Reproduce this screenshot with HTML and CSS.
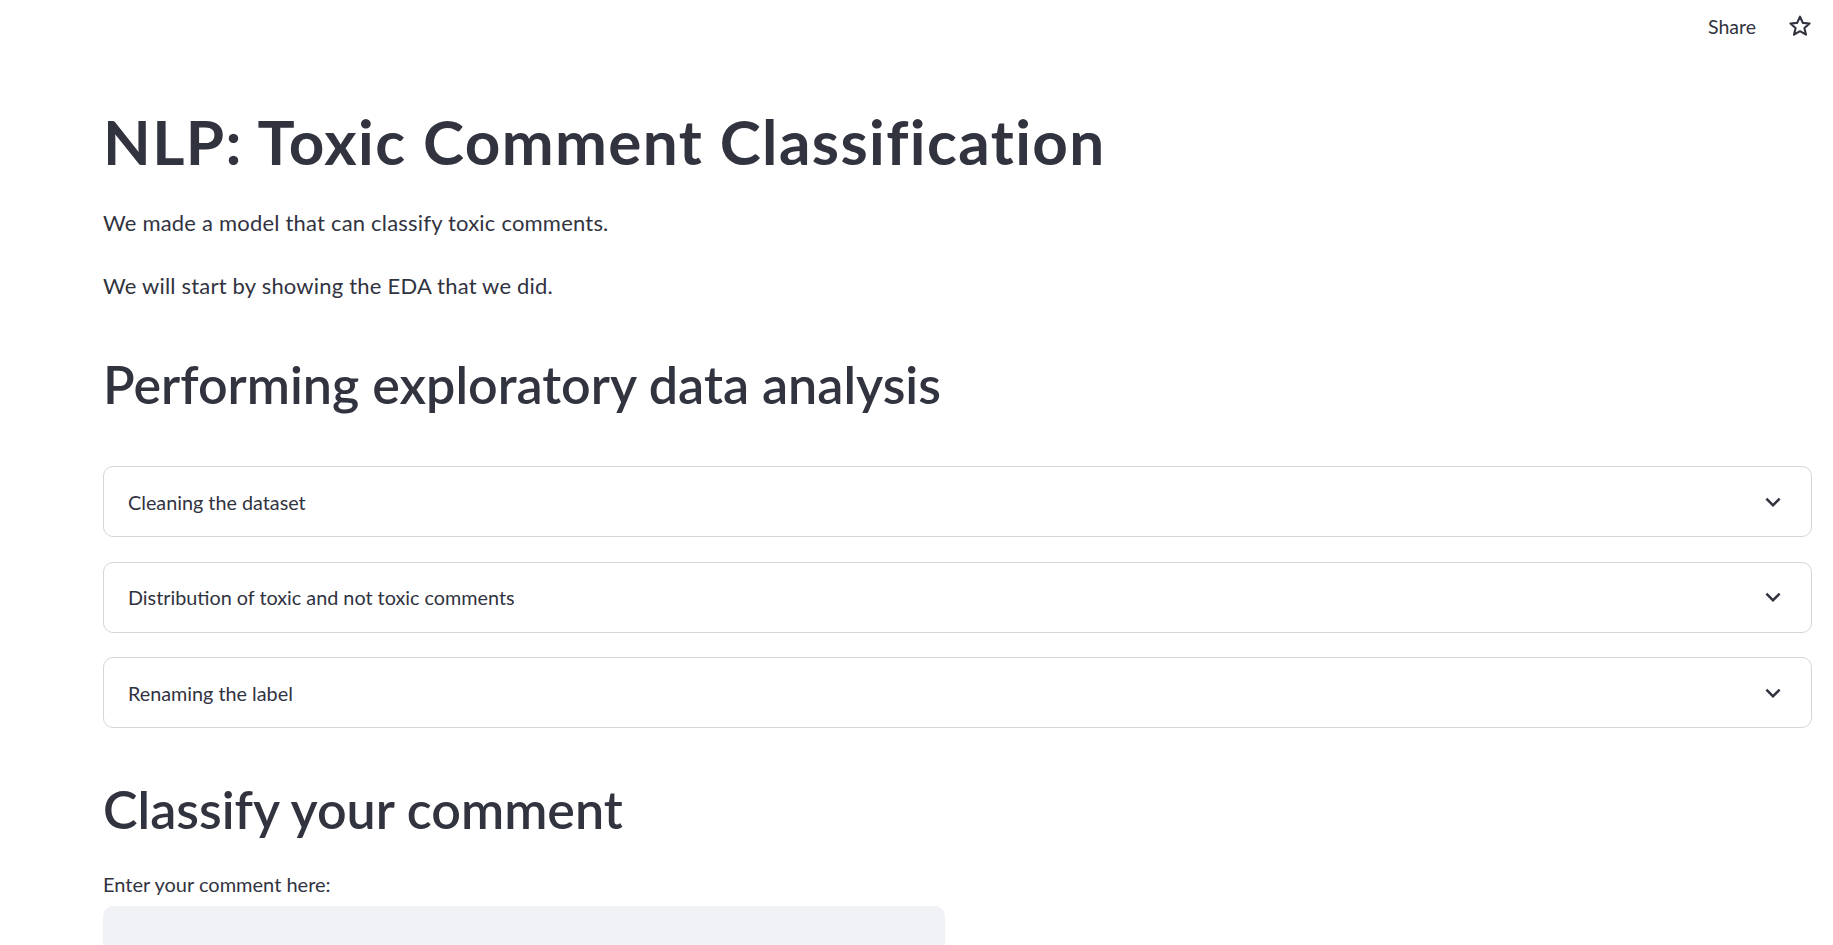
FILE: index.html
```html
<!DOCTYPE html>
<html lang="en">
<head>
<meta charset="utf-8">
<title>NLP: Toxic Comment Classification</title>
<link rel="stylesheet" href="styles.css">
</head>
<body>
<header class="topbar">
  <span class="share">Share</span>
  <svg class="star" viewBox="0 0 24 24" width="24" height="24" aria-hidden="true">
    <polygon points="12,2.6 14.8,8.9 21.6,9.5 16.4,14 18,20.7 12,17.2 6,20.7 7.6,14 2.4,9.5 9.2,8.9" fill="none" stroke="#31333F" stroke-width="2.1" stroke-linejoin="round"/>
  </svg>
</header>
<main class="main">
  <h1 class="title">NLP: Toxic Comment Classification</h1>
  <p class="text first">We made a model that can classify toxic comments.</p>
  <p class="text second">We will start by showing the EDA that we did.</p>

  <h2 class="header eda">Performing exploratory data analysis</h2>

  <div class="expanders">
    <div class="expander">
      <span class="exp-label">Cleaning the dataset</span>
      <svg class="chev" viewBox="0 0 24 24" width="30" height="30" aria-hidden="true"><path d="M16.59 8.59L12 13.17 7.41 8.59 6 10l6 6 6-6z" fill="#31333F"/></svg>
    </div>
    <div class="expander">
      <span class="exp-label">Distribution of toxic and not toxic comments</span>
      <svg class="chev" viewBox="0 0 24 24" width="30" height="30" aria-hidden="true"><path d="M16.59 8.59L12 13.17 7.41 8.59 6 10l6 6 6-6z" fill="#31333F"/></svg>
    </div>
    <div class="expander">
      <span class="exp-label">Renaming the label</span>
      <svg class="chev" viewBox="0 0 24 24" width="30" height="30" aria-hidden="true"><path d="M16.59 8.59L12 13.17 7.41 8.59 6 10l6 6 6-6z" fill="#31333F"/></svg>
    </div>
  </div>

  <h2 class="header classify">Classify your comment</h2>
  <label class="field-label" for="comment">Enter your comment here:</label>
  <textarea id="comment" class="comment"></textarea>
</main>
</body>
</html>
```

FILE: styles.css
```css
html, body {
  margin: 0;
  padding: 0;
  background: #ffffff;
  overflow: hidden;
}
body {
  font-family: "Lato", "Source Sans Pro", "Noto Sans", sans-serif;
  color: #31333F;
}
.topbar {
  height: 52px;
  display: flex;
  align-items: center;
  justify-content: flex-end;
  gap: 32px;
  padding-right: 21px;
}
.share {
  font-size: 19.5px;
  color: #31333F;
}
.star {
  width: 24px;
  height: 24px;
}
.main {
  padding: 53px 21px 0 103px;
}
.title {
  margin: 0;
  font-size: 62px;
  font-weight: 700;
  line-height: 72px;
  letter-spacing: 1.4px;
}
.text {
  margin: 0;
  font-size: 22px;
  line-height: 33.6px;
  letter-spacing: 0.2px;
}
.text.first { margin-top: 29px; }
.text.second { margin-top: 29.4px; }
.header {
  margin: 0;
  font-size: 52px;
  font-weight: 600;
  line-height: 63.6px;
}
.header.eda { margin-top: 50px; }
.header.classify { margin-top: 50px; }
.expanders {
  margin-top: 50px;
  display: flex;
  flex-direction: column;
  gap: 24.5px;
}
.expander {
  height: 71px;
  box-sizing: border-box;
  border: 1px solid rgba(49, 51, 63, 0.2);
  border-radius: 10px;
  display: flex;
  align-items: center;
  justify-content: space-between;
  padding: 0 23px 0 24px;
}
.exp-label {
  font-size: 19.8px;
}
.chev {
  width: 30px;
  height: 30px;
}
.field-label {
  display: block;
  margin-top: 27px;
  font-size: 20px;
  line-height: 30.4px;
}
.comment {
  display: block;
  margin-top: 7px;
  width: 842px;
  height: 160px;
  box-sizing: border-box;
  border: none;
  border-radius: 10px;
  background: #F0F2F6;
  resize: none;
  outline: none;
}
```
